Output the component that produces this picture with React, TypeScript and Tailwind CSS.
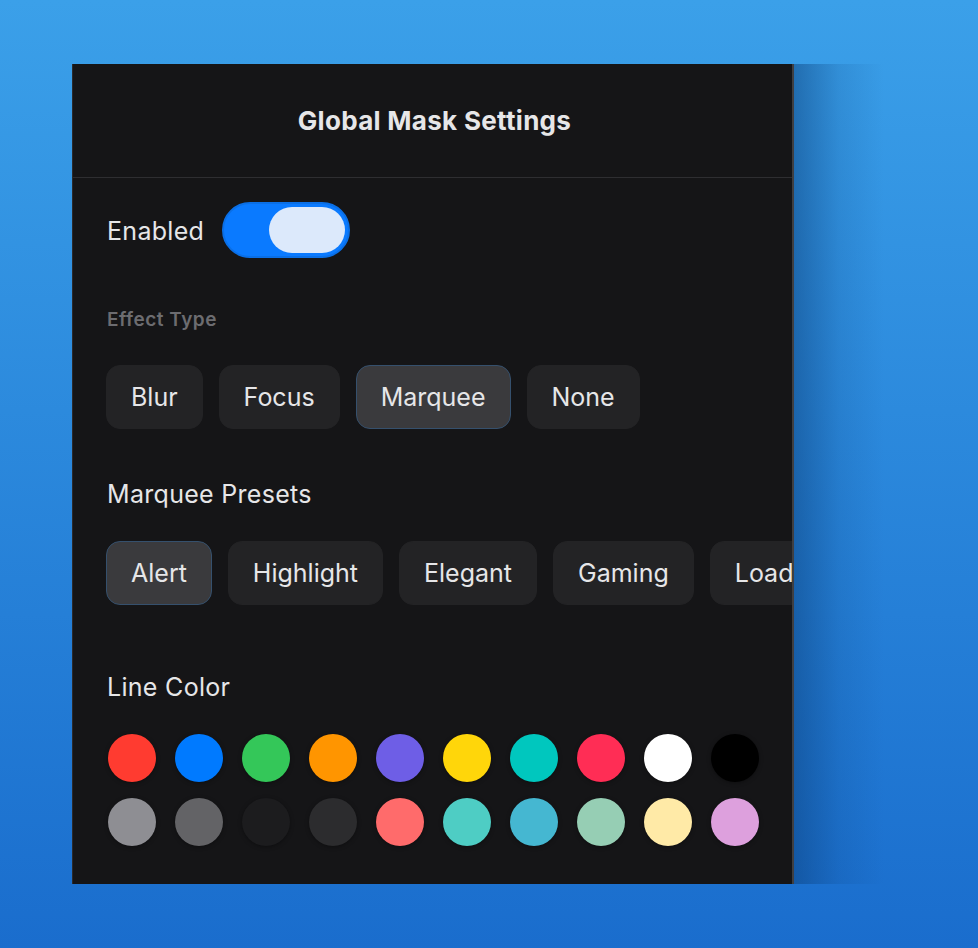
import { useState } from "react";

const EFFECTS = ["Blur", "Focus", "Marquee", "None"];
const PRESETS = ["Alert", "Highlight", "Elegant", "Gaming", "Loading"];
const COLORS = [
  "#ff3b30", "#007aff", "#34c759", "#ff9500", "#6e5ee6",
  "#ffd60a", "#00c7be", "#ff2d55", "#ffffff", "#000000",
  "#8e8e93", "#636366", "#1c1c1e", "#2c2c2e", "#ff6b6b",
  "#4ecdc4", "#45b7d1", "#96ceb4", "#ffeaa7", "#dda0dd",
];

function Chip({ label, active, onClick }: { label: string; active: boolean; onClick: () => void }) {
  return (
    <button
      onClick={onClick}
      className={
        "shrink-0 h-16 px-6 rounded-[14px] border text-[25px] leading-none text-[#e6e6e8] " +
        (active ? "bg-[#3a3a3d] border-[#35506d]" : "bg-[#232325] border-[#232325]")
      }
    >
      {label}
    </button>
  );
}

export default function App() {
  const [enabled, setEnabled] = useState(true);
  const [effect, setEffect] = useState("Marquee");
  const [preset, setPreset] = useState("Alert");

  return (
    <div
      className="w-[978px] h-[948px] overflow-hidden bg-gradient-to-b from-[#3ba0e9] to-[#1a6dcd] pt-16 pl-[72px]"
      style={{ fontFamily: "Inter, 'Noto Sans', sans-serif" }}
    >
      <div className="flex h-[820px]">
        {/* Panel */}
        <div className="w-[722px] h-full bg-[#151517] border-l border-[#2a2a2d] border-r-2 border-r-[#3f3f42] flex flex-col overflow-hidden">
          {/* Header */}
          <div className="h-[114px] shrink-0 flex items-center justify-center border-b border-[#2e2e31]">
            <h1 className="ml-1 text-[26px] font-bold text-[#e6e6e8] tracking-[0.3px]">Global Mask Settings</h1>
          </div>

          <div className="pl-[33px] pt-6 flex flex-col">
            {/* Enabled */}
            <div className="flex items-center gap-[18px] pl-px">
              <span className="text-[25px] tracking-[0.3px] pt-1 text-[#e6e6e8]">Enabled</span>
              <button
                onClick={() => setEnabled(!enabled)}
                className={
                  "w-32 h-14 rounded-full p-[3px] flex border-2 " +
                  (enabled ? "bg-[#0a7aff] border-[#0a6fe6] justify-end" : "bg-[#3a3a3c] border-[#3a3a3c] justify-start")
                }
              >
                <span className="w-[76px] h-full rounded-full bg-[#dce9fb]" />
              </button>
            </div>

            {/* Effect type */}
            <div className="mt-[50px] pl-px text-[19px] tracking-[0.5px] leading-6 font-semibold text-[#6c6c70]">Effect Type</div>
            <div className="mt-[33px] flex gap-4">
              {EFFECTS.map((e) => (
                <Chip key={e} label={e} active={effect === e} onClick={() => setEffect(e)} />
              ))}
            </div>

            {/* Presets */}
            <div className="mt-[49px] pl-px text-[25px] tracking-[0.3px] leading-8 text-[#e6e6e8]">Marquee Presets</div>
            <div className="mt-[31px] flex gap-4 overflow-hidden">
              {PRESETS.map((p) => (
                <Chip key={p} label={p} active={preset === p} onClick={() => setPreset(p)} />
              ))}
            </div>

            {/* Line color */}
            <div className="mt-[66px] pl-px text-[25px] tracking-[0.3px] leading-8 text-[#e6e6e8]">Line Color</div>
            <div className="mt-[31px] grid grid-cols-[repeat(10,48px)] gap-x-[19px] gap-y-4 pl-[2px]">
              {COLORS.map((c) => (
                <button
                  key={c}
                  className="w-12 h-12 rounded-full shadow-[0_1px_4px_rgba(0,0,0,0.35)]"
                  style={{ backgroundColor: c }}
                />
              ))}
            </div>
          </div>
        </div>

        {/* Window shadow */}
        <div className="w-[90px] h-full bg-gradient-to-r from-[#0b3f7a]/50 via-[#0b3f7a]/15 to-transparent" />
      </div>
    </div>
  );
}
